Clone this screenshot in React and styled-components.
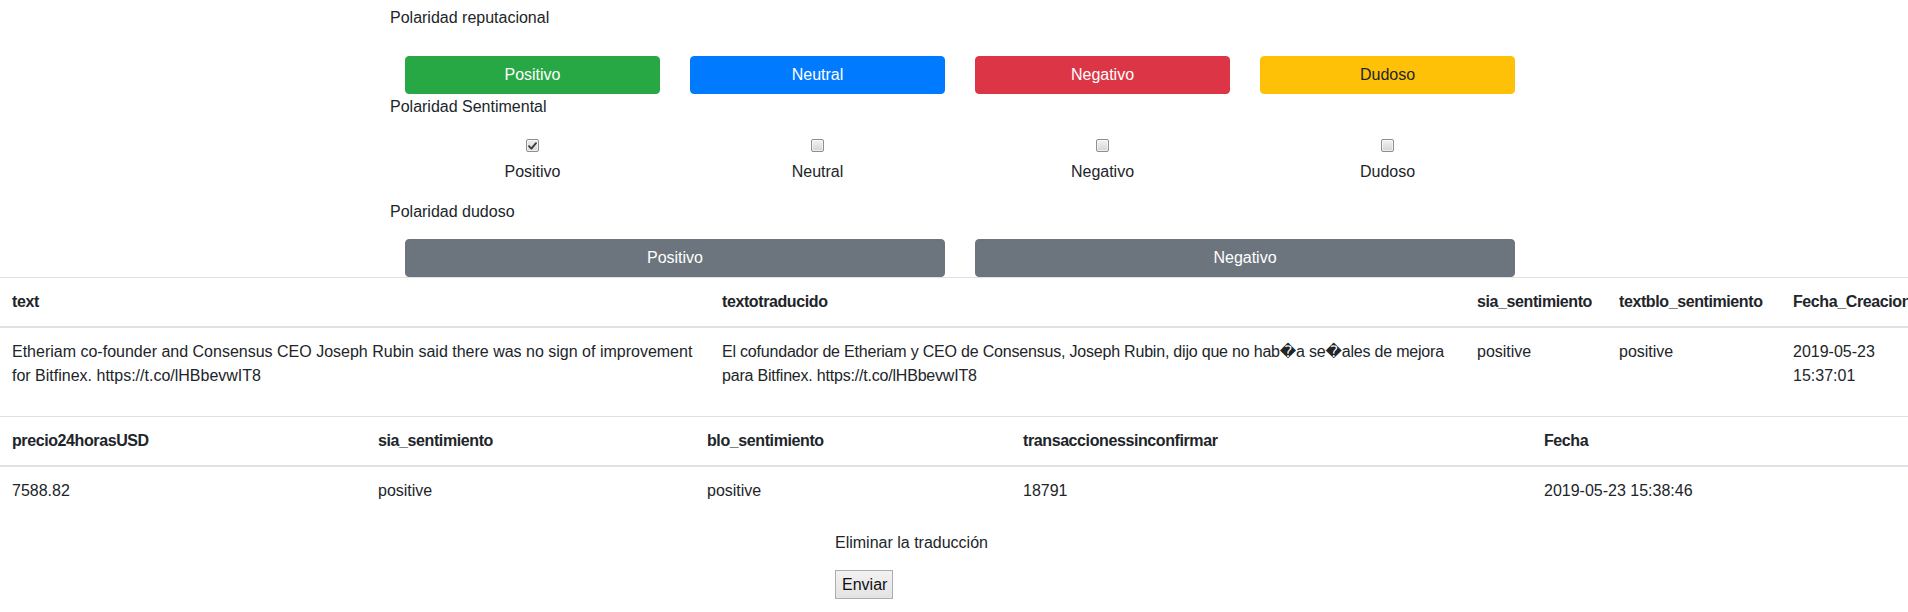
import React from "react";
import styled, { createGlobalStyle } from "styled-components";

const GlobalStyle = createGlobalStyle`
  html, body {
    margin: 0;
    padding: 0;
    background: #ffffff;
  }
  body {
    font-family: "Liberation Sans", Arial, "DejaVu Sans", sans-serif;
    font-size: 16px;
    line-height: 1.5;
    color: #212529;
    overflow-x: hidden;
  }
  * { box-sizing: border-box; }
`;

const Page = styled.div`
  width: 1908px;
  overflow: hidden;
`;

const Panel = styled.div`
  width: 1140px;
  margin-left: 390px;
  padding-top: 6px;
`;

const SectionLabel = styled.div`
  height: 24px;
  line-height: 24px;
  margin-top: ${(p) => p.$top || 0}px;
  margin-bottom: ${(p) => p.$bottom || 0}px;
`;

const Row = styled.div`
  display: grid;
  grid-template-columns: repeat(${(p) => p.$cols}, 1fr);
  margin-top: ${(p) => p.$top || 0}px;
`;

const Cell = styled.div`
  padding: 0 15px;
`;

const palette = {
  success: { bg: "#28a745", fg: "#ffffff" },
  primary: { bg: "#007bff", fg: "#ffffff" },
  danger: { bg: "#dc3545", fg: "#ffffff" },
  warning: { bg: "#ffc107", fg: "#212529" },
  secondary: { bg: "#6c757d", fg: "#ffffff" },
};

const ColorButton = styled.button`
  display: block;
  width: 100%;
  height: 38px;
  padding: 6px 12px;
  font-family: inherit;
  font-size: 16px;
  line-height: 24px;
  font-weight: 400;
  text-align: center;
  border-radius: 4px;
  border: 1px solid ${(p) => palette[p.$variant].bg};
  background: ${(p) => palette[p.$variant].bg};
  color: ${(p) => palette[p.$variant].fg};
  cursor: pointer;
`;

const CheckCell = styled.label`
  display: flex;
  flex-direction: column;
  align-items: center;
  padding-top: 20px;
  cursor: pointer;
`;

const HiddenInput = styled.input`
  position: absolute;
  opacity: 0;
  width: 0;
  height: 0;
  margin: 0;
`;

const Box = styled.span`
  display: flex;
  align-items: center;
  justify-content: center;
  width: 13px;
  height: 13px;
  border: 1px solid #8e8e8e;
  border-radius: 2px;
  background: ${(p) =>
    p.$checked
      ? "linear-gradient(#ececec, #dadada)"
      : "linear-gradient(#f2f2f2, #d4d4d4)"};
  box-shadow: inset 0 0 0 1px rgba(255, 255, 255, 0.6);
`;

const CheckText = styled.span`
  display: block;
  margin-top: 8px;
  height: 24px;
  line-height: 24px;
`;

const TableWrap = styled.div`
  width: 1908px;
  overflow: hidden;
  margin-bottom: 16px;
`;

const DataTable = styled.table`
  border-collapse: collapse;
  table-layout: fixed;
  width: ${(p) => p.$width}px;
  color: #212529;
`;

const HeadCell = styled.th`
  text-align: left;
  font-weight: 700;
  padding: 12px;
  line-height: 24px;
  letter-spacing: -0.4px;
  vertical-align: bottom;
  border-top: 1px solid #dee2e6;
  border-bottom: 2px solid #dee2e6;
  white-space: nowrap;
  overflow: visible;
`;

const BodyCell = styled.td`
  padding: 12px;
  line-height: 24px;
  letter-spacing: ${(p) => (p.$tight ? "-0.2px" : "0")};
  vertical-align: top;
  border-top: 1px solid #dee2e6;
`;

const FormBlock = styled.div`
  margin-left: 835px;
  display: flex;
  flex-direction: column;
  align-items: flex-start;
`;

const Caption = styled.div`
  height: 24px;
  line-height: 24px;
`;

const SubmitButton = styled.button`
  margin-top: 15px;
  width: 58px;
  height: 29px;
  padding: 0 6px;
  font-family: inherit;
  font-size: 16px;
  line-height: 24px;
  color: #111;
  border: 1px solid #adadad;
  border-radius: 0;
  background: linear-gradient(#f2f2f2, #e3e3e3);
  cursor: pointer;
`;

function Check({ checked, label }) {
  const [on, setOn] = React.useState(checked);
  return (
    <CheckCell>
      <HiddenInput type="checkbox" checked={on} onChange={() => setOn(!on)} />
      <Box $checked={on}>
        {on && (
          <svg width="9" height="8" viewBox="0 0 9 8">
            <path d="M1 4.2 L3.4 6.6 L8 1.2" fill="none" stroke="#3a3a3a" strokeWidth="1.8" strokeLinecap="round" strokeLinejoin="round" />
          </svg>
        )}
      </Box>
      <CheckText>{label}</CheckText>
    </CheckCell>
  );
}

const table1Cols = [710, 755, 142, 174, 160];
const table2Cols = [366, 329, 316, 521, 376];

export default function App() {
  return (
    <>
      <GlobalStyle />
      <Page>
        <Panel>
          <SectionLabel $bottom={26}>Polaridad reputacional</SectionLabel>
          <Row $cols={4}>
            <Cell><ColorButton $variant="success">Positivo</ColorButton></Cell>
            <Cell><ColorButton $variant="primary">Neutral</ColorButton></Cell>
            <Cell><ColorButton $variant="danger">Negativo</ColorButton></Cell>
            <Cell><ColorButton $variant="warning">Dudoso</ColorButton></Cell>
          </Row>
          <SectionLabel $top={1}>Polaridad Sentimental</SectionLabel>
          <Row $cols={4}>
            <Check checked label="Positivo" />
            <Check checked={false} label="Neutral" />
            <Check checked={false} label="Negativo" />
            <Check checked={false} label="Dudoso" />
          </Row>
          <SectionLabel $top={16}>Polaridad dudoso</SectionLabel>
          <Row $cols={2} $top={15}>
            <Cell><ColorButton $variant="secondary">Positivo</ColorButton></Cell>
            <Cell><ColorButton $variant="secondary">Negativo</ColorButton></Cell>
          </Row>
        </Panel>

        <TableWrap>
          <DataTable $width={table1Cols.reduce((a, b) => a + b, 0)}>
            <colgroup>
              {table1Cols.map((w, i) => (
                <col key={i} style={{ width: w }} />
              ))}
            </colgroup>
            <thead>
              <tr>
                <HeadCell>text</HeadCell>
                <HeadCell>textotraducido</HeadCell>
                <HeadCell>sia_sentimiento</HeadCell>
                <HeadCell>textblo_sentimiento</HeadCell>
                <HeadCell>Fecha_Creacion</HeadCell>
              </tr>
            </thead>
            <tbody>
              <tr>
                <BodyCell>
                  Etheriam co-founder and Consensus CEO Joseph Rubin said there was no sign of improvement for Bitfinex. https://t.co/lHBbevwIT8
                </BodyCell>
                <BodyCell $tight>
                  El cofundador de Etheriam y CEO de Consensus, Joseph Rubin, dijo que no hab{"\uFFFD"}a se{"\uFFFD"}ales de mejora para Bitfinex. https://t.co/lHBbevwIT8
                </BodyCell>
                <BodyCell>positive</BodyCell>
                <BodyCell>positive</BodyCell>
                <BodyCell>2019-05-23 15:37:01</BodyCell>
              </tr>
            </tbody>
          </DataTable>
        </TableWrap>

        <TableWrap>
          <DataTable $width={table2Cols.reduce((a, b) => a + b, 0)}>
            <colgroup>
              {table2Cols.map((w, i) => (
                <col key={i} style={{ width: w }} />
              ))}
            </colgroup>
            <thead>
              <tr>
                <HeadCell>precio24horasUSD</HeadCell>
                <HeadCell>sia_sentimiento</HeadCell>
                <HeadCell>blo_sentimiento</HeadCell>
                <HeadCell>transaccionessinconfirmar</HeadCell>
                <HeadCell>Fecha</HeadCell>
              </tr>
            </thead>
            <tbody>
              <tr>
                <BodyCell>7588.82</BodyCell>
                <BodyCell>positive</BodyCell>
                <BodyCell>positive</BodyCell>
                <BodyCell>18791</BodyCell>
                <BodyCell>2019-05-23 15:38:46</BodyCell>
              </tr>
            </tbody>
          </DataTable>
        </TableWrap>

        <FormBlock>
          <Caption>Eliminar la traducción</Caption>
          <SubmitButton type="submit">Enviar</SubmitButton>
        </FormBlock>
      </Page>
    </>
  );
}
